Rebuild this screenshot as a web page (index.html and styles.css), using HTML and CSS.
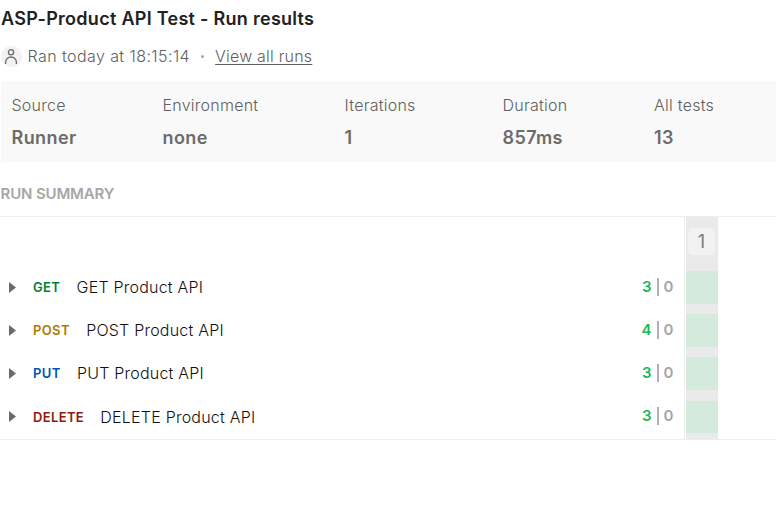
FILE: index.html
```
<!DOCTYPE html>
<html lang="en">
<head>
<meta charset="utf-8">
<title>Run results</title>
<link rel="stylesheet" href="styles.css">
</head>
<body>
<main class="page">
  <h1 class="title">ASP-Product API Test - Run results</h1>
  <div class="meta">
    <svg class="avatar" viewBox="0 0 21 21" width="21" height="21"><circle cx="10.5" cy="10.5" r="10.5" fill="#f2f2f2"/><g fill="none" stroke="#6b6b6b" stroke-width="1.3"><circle cx="10" cy="6.2" r="2.6"/><path d="M4.6 18v-1.6a5.4 5.4 0 0 1 10.8 0V18"/></g></svg>
    <span class="ran">Ran today at 18:15:14</span>
    <span class="dot"></span>
    <a class="link">View all runs</a>
  </div>
  <dl class="stats">
    <div class="stat"><dt>Source</dt><dd>Runner</dd></div>
    <div class="stat"><dt>Environment</dt><dd>none</dd></div>
    <div class="stat"><dt>Iterations</dt><dd>1</dd></div>
    <div class="stat"><dt>Duration</dt><dd>857ms</dd></div>
    <div class="stat"><dt>All tests</dt><dd>13</dd></div>
  </dl>
  <h2 class="heading">RUN SUMMARY</h2>
  <section class="summary">
    <div class="requests">
      <div class="row"><svg class="arrow" viewBox="0 0 7 11"><path d="M0 0l7 5.5L0 11z"/></svg><span class="method get">GET</span><span class="name">GET Product API</span><span class="count"><b>3</b><i></i><em>0</em></span></div>
      <div class="row"><svg class="arrow" viewBox="0 0 7 11"><path d="M0 0l7 5.5L0 11z"/></svg><span class="method post">POST</span><span class="name">POST Product API</span><span class="count"><b>4</b><i></i><em>0</em></span></div>
      <div class="row"><svg class="arrow" viewBox="0 0 7 11"><path d="M0 0l7 5.5L0 11z"/></svg><span class="method put">PUT</span><span class="name">PUT Product API</span><span class="count"><b>3</b><i></i><em>0</em></span></div>
      <div class="row"><svg class="arrow" viewBox="0 0 7 11"><path d="M0 0l7 5.5L0 11z"/></svg><span class="method delete">DELETE</span><span class="name">DELETE Product API</span><span class="count"><b>3</b><i></i><em>0</em></span></div>
    </div>
    <div class="iteration">
      <div class="number">1</div>
      <div class="cell"></div><div class="cell"></div><div class="cell"></div><div class="cell"></div>
    </div>
  </section>
</main>
</body>
</html>
```
FILE: styles.css
```
* { box-sizing: border-box; }
body { margin: 0; background: #fff; color: #212121; font-family: Inter, sans-serif; }
.page { height: 512px; overflow: hidden; }
.title { margin: 0; padding: 7px 0 0 1px; font-size: 18px; line-height: 24px; font-weight: 600; letter-spacing: .28px; white-space: nowrap; }
.meta { display: flex; align-items: center; height: 22px; margin-top: 14px; padding-left: 1px; font-size: 16px; font-weight: 300; letter-spacing: .42px; color: #5f5f5f; }
.ran { margin-left: 5.5px; }
.dot { width: 3px; height: 3px; border-radius: 50%; background: #a6a6a6; margin: 0 11px; }
.link { letter-spacing: .2px; text-decoration: underline; text-decoration-thickness: 1px; text-underline-offset: 2px; }
.stats { display: grid; grid-template-columns: 151px 182px 158px 151.5px 1fr; height: 81px; margin: 14px 0 0 1px; padding: 14px 0 0 10.5px; background: #f9f9f9; color: #6b6b6b; }
.stat dt { font-size: 16px; line-height: 20px; font-weight: 300; letter-spacing: .25px; color: #5f5f5f; }
.stat dd { margin: 11px 0 0; font-size: 18px; line-height: 24px; font-weight: 600; letter-spacing: .4px; }
.heading { margin: 22px 0 0 .5px; font-size: 15px; line-height: 20px; font-weight: 600; letter-spacing: -.15px; color: #a6a6a6; }
.summary { display: flex; height: 224px; margin-top: 12px; border-top: 1px solid #ededed; border-bottom: 1px solid #ededed; }
.requests { width: 685px; padding-top: 48.5px; border-right: 1px solid #ededed; }
.row { display: flex; align-items: center; height: 43.2px; padding: 0 10.5px 0 9px; }
.arrow { width: 7px; height: 11px; margin-right: 17px; fill: #6b6b6b; }
.method { font-size: 13px; font-weight: 600; letter-spacing: .35px; }
.get { color: #007f31; }
.post { color: #ad7a03; }
.put { color: #0053b8; }
.delete { color: #8e1a10; }
.name { margin-left: 16.3px; font-size: 16px; font-weight: 300; letter-spacing: .22px; color: #111; }
.count { display: flex; align-items: center; margin-left: auto; font-size: 15px; line-height: 18px; font-weight: 600; padding-bottom: 1px; }
.count b { font-weight: 600; color: #1db954; }
.count i { width: 2px; height: 18px; margin: 0 5px; background: #b0aeb5; }
.count em { font-style: normal; color: #a6a6a6; }
.iteration { width: 32px; margin-left: 1px; background: #eaeaea; }
.number { width: 27px; height: 27px; margin: 11px 0 16px 2px; border-radius: 5px; background: #f2f2f2; color: #7b7b7b; font-size: 18px; line-height: 27px; text-align: center; }
.cell { height: 32.7px; margin-bottom: 10.5px; background: #d3eadd; }
```
